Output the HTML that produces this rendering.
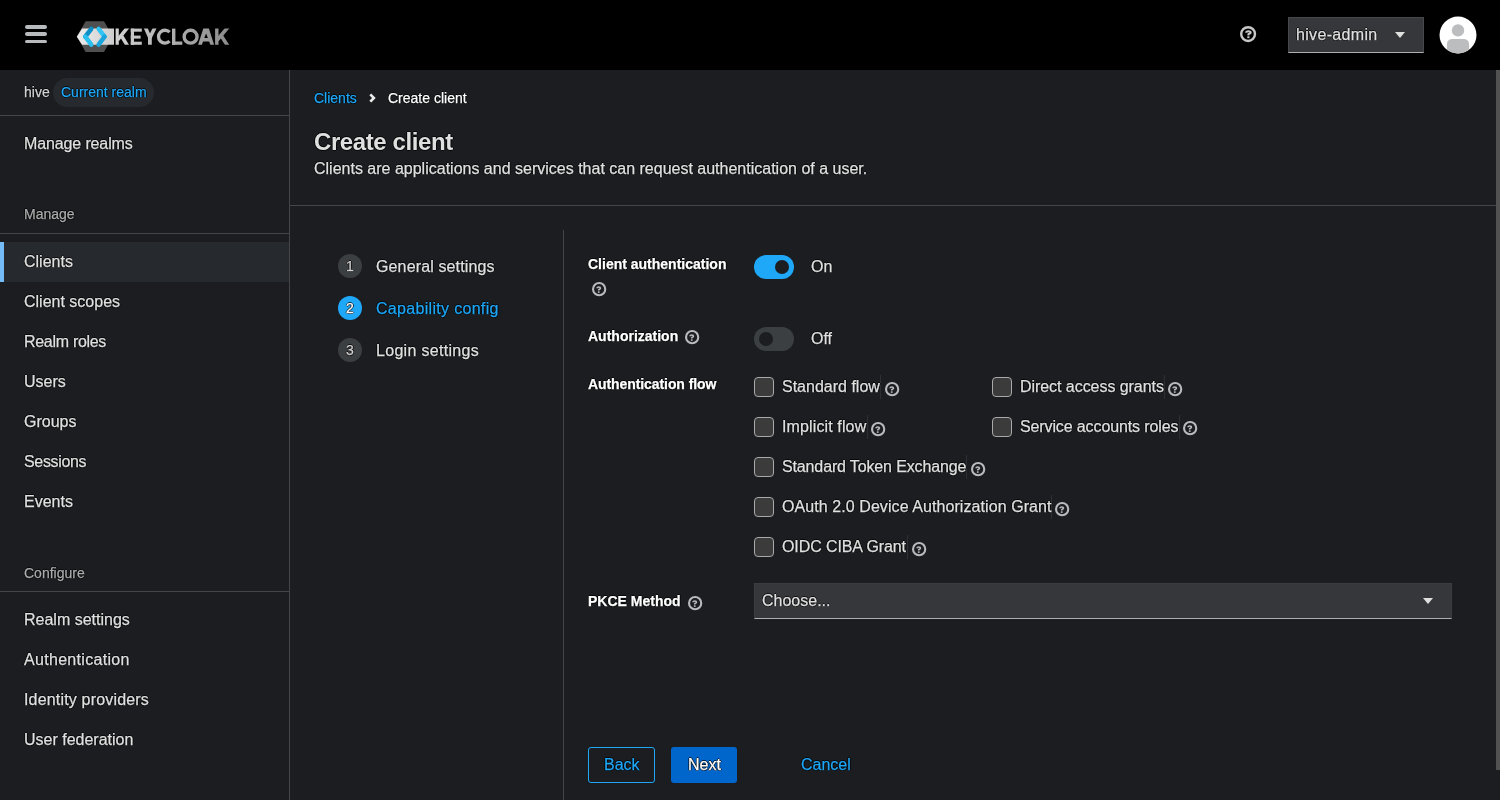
<!DOCTYPE html>
<html><head><meta charset="utf-8">
<style>
*{box-sizing:border-box;margin:0;padding:0}
html,body{width:1500px;height:800px;overflow:hidden;background:#1b1d21;font-family:"Liberation Sans",sans-serif;color:#e0e0e0}
.a{position:absolute;white-space:nowrap;line-height:1;will-change:transform;-webkit-text-stroke:0.25px currentColor;text-shadow:1px 0 0 rgba(0,0,0,.75),-1px 0 0 rgba(0,0,0,.75),0 1px 0 rgba(0,0,0,.75),0 -1px 0 rgba(0,0,0,.75)}
.f14{font-size:14px}
.f16{font-size:16px}
.f24{font-size:24px}
.b{font-weight:700}
.help{position:absolute}
.hl{position:absolute;background:#444548;height:1px}
.vl{position:absolute;background:#444548;width:1px}
.cb{position:absolute;width:20px;height:20px;border:1px solid #a9a9a9;border-radius:4px;background:#3b3b3c}
.blue{color:#1fa7f8}
.lbl{color:#fff}
.r{position:absolute}
</style></head>
<body>
<div class="r" style="left:0;top:0;width:1500px;height:70px;background:#000"></div>
<div class="r" style="left:25px;top:25px;width:22px;height:3.5px;border-radius:2px;background:#b8bbbe"></div>
<div class="r" style="left:25px;top:32px;width:22px;height:3.5px;border-radius:2px;background:#b8bbbe"></div>
<div class="r" style="left:25px;top:39.5px;width:22px;height:3.5px;border-radius:2px;background:#b8bbbe"></div>
<svg class="r" style="left:0;top:0" width="240" height="70" viewBox="0 0 240 70">
<defs>
<linearGradient id="tg" gradientUnits="userSpaceOnUse" x1="114" y1="0" x2="229" y2="0"><stop offset="0" stop-color="#d2d2d2"/><stop offset="1" stop-color="#8c8c8c"/></linearGradient>
<linearGradient id="bgr" gradientUnits="userSpaceOnUse" x1="77" y1="0" x2="114" y2="0"><stop offset="0" stop-color="#ececec"/><stop offset="1" stop-color="#cdcdcd"/></linearGradient>
<clipPath id="tc"><rect x="100" y="28.6" width="140" height="16.2"/></clipPath>
</defs>
<polygon points="85.6,21.2 104,21.2 112.8,36.6 104,52 85.6,52 76.8,36.6" fill="#4f4f4f"/>
<polygon points="82.1,28.6 114,28.6 114,44.8 82.1,44.8 76.8,36.7" fill="url(#bgr)"/>
<line x1="91.3" y1="28.8" x2="85.3" y2="36.7" stroke="#0c8fc6" stroke-width="4.5" stroke-linecap="round"/>
<line x1="85.3" y1="36.7" x2="91.3" y2="44.6" stroke="#2bbff0" stroke-width="4.5" stroke-linecap="round"/>
<line x1="98.6" y1="28.8" x2="104.6" y2="36.7" stroke="#30c4f3" stroke-width="4.5" stroke-linecap="round"/>
<line x1="104.6" y1="36.7" x2="98.6" y2="44.6" stroke="#1aa6dc" stroke-width="4.5" stroke-linecap="round"/>
<g fill="url(#tg)" stroke="none">
<g clip-path="url(#tc)" stroke="url(#tg)" fill="none">
<line x1="117.2" y1="27" x2="117.2" y2="46" stroke-width="3.2"/>
<line x1="117.6" y1="40" x2="128.6" y2="26.2" stroke-width="3.6"/>
<line x1="120.6" y1="34.4" x2="128" y2="46.6" stroke-width="3.6"/>
<line x1="145.2" y1="27" x2="149.9" y2="37.6" stroke-width="3.6"/>
<line x1="155.2" y1="27" x2="149.9" y2="37.6" stroke-width="3.6"/>
<line x1="149.9" y1="37" x2="149.9" y2="46" stroke-width="3.8"/>
<line x1="216.8" y1="27" x2="216.8" y2="46" stroke-width="3.4"/>
<line x1="217.2" y1="40" x2="228.8" y2="26.2" stroke-width="3.6"/>
<line x1="220.4" y1="34.4" x2="228.2" y2="46.6" stroke-width="3.6"/>
</g>
<rect x="130.8" y="28.6" width="3.2" height="16.2"/>
<rect x="130.8" y="28.6" width="11" height="3.1"/>
<rect x="130.8" y="35.6" width="9.8" height="3"/>
<rect x="130.8" y="41.7" width="11" height="3.1"/>
<path d="M169.6 32.2 A6.45 6.45 0 1 0 169.6 41.2" fill="none" stroke="url(#tg)" stroke-width="3.3"/>
<rect x="172" y="28.6" width="3.4" height="16.2"/>
<rect x="172" y="41.5" width="10.3" height="3.3"/>
<circle cx="190.6" cy="36.7" r="6.45" fill="none" stroke="url(#tg)" stroke-width="3.4"/>
<path fill-rule="evenodd" d="M198.1 44.8 L203.3 28.6 L208.9 28.6 L214.1 44.8 L210.3 44.8 L209.2 41.5 L203 41.5 L201.9 44.8 Z M204.3 38.1 L206.1 33.4 L207.9 38.1 Z"/>
</g>
</svg>
<svg class="help" style="left:1237.90px;top:23.80px" width="20.20" height="20.20" viewBox="0 0 20.20 20.20"><circle cx="10.10" cy="10.10" r="6.90" fill="none" stroke="#c7c7c7" stroke-width="2.4"/><path d="M8.10 8.79A2.30 1.59 0 0 1 12.70 8.79C12.70 10.06 10.40 9.58 10.40 10.25V11.44" fill="none" stroke="#c7c7c7" stroke-width="2.0"/><rect x="9.30" y="12.32" width="2.20" height="1.83" fill="#c7c7c7"/></svg>
<div class="r" style="left:1288px;top:17px;width:136px;height:36px;background:#36373b;border:1px solid #47484c;border-bottom-color:#aeafb2"></div>
<div class="a f16 " style="left:1296px;top:27px;letter-spacing:0.333px;">hive-admin</div>
<svg class="r" style="left:1395px;top:32px" width="10" height="6" viewBox="0 0 10 6"><polygon points="0,0 10,0 5,6" fill="#e0e0e0"/></svg>
<svg class="r" style="left:1439px;top:16px" width="38" height="38" viewBox="0 0 38 38">
<defs><clipPath id="av"><circle cx="19" cy="19" r="18.5"/></clipPath></defs>
<circle cx="19" cy="19" r="18.5" fill="#fff"/>
<g clip-path="url(#av)"><circle cx="19" cy="14.4" r="6.2" fill="#bcbdbe"/><path d="M7.9 40 V30 C7.9 24.5 9.5 23 15 23 H23 C28.5 23 30.1 24.5 30.1 30 V40 Z" fill="#bcbdbe"/></g>
</svg>
<div class="vl" style="left:289px;top:70px;height:730px"></div>
<div class="a f14 " style="left:24px;top:85px;color:#d2d2d2">hive</div>
<div class="r" style="left:53px;top:78px;width:101px;height:29px;border-radius:15px;background:#26292d"></div>
<div class="a f14 blue" style="left:61px;top:85px;">Current realm</div>
<div class="hl" style="left:0;top:115px;width:289px"></div>
<div class="a f16 " style="left:24px;top:136px;letter-spacing:-0.125px;">Manage realms</div>
<div class="a f14 " style="left:24px;top:207px;color:#aaabac">Manage</div>
<div class="hl" style="left:0;top:233px;width:289px"></div>
<div class="r" style="left:0;top:242px;width:289px;height:40px;background:#26292d"></div>
<div class="r" style="left:0;top:242px;width:4px;height:40px;background:#73bcf7"></div>
<div class="a f16 " style="left:24px;top:254px;">Clients</div>
<div class="a f16 " style="left:24px;top:294px;">Client scopes</div>
<div class="a f16 " style="left:24px;top:334px;letter-spacing:-0.300px;">Realm roles</div>
<div class="a f16 " style="left:24px;top:374px;">Users</div>
<div class="a f16 " style="left:24px;top:414px;">Groups</div>
<div class="a f16 " style="left:24px;top:454px;letter-spacing:-0.343px;">Sessions</div>
<div class="a f16 " style="left:24px;top:494px;">Events</div>
<div class="a f14 " style="left:24px;top:566px;color:#aaabac">Configure</div>
<div class="hl" style="left:0;top:591px;width:289px"></div>
<div class="a f16 " style="left:24px;top:612px;">Realm settings</div>
<div class="a f16 " style="left:24px;top:652px;letter-spacing:0.308px;">Authentication</div>
<div class="a f16 " style="left:24px;top:692px;letter-spacing:0.176px;">Identity providers</div>
<div class="a f16 " style="left:24px;top:732px;">User federation</div>
<div class="a f14 blue" style="left:314px;top:91px;">Clients</div>
<svg class="r" style="left:368px;top:93px" width="8" height="10" viewBox="0 0 8 10"><polyline points="2.3,1.3 5.9,5 2.3,8.7" fill="none" stroke="#ececec" stroke-width="2.6"/></svg>
<div class="a f14 " style="left:388px;top:91px;color:#fff">Create client</div>
<div class="a f24 b" style="left:314px;top:130px;letter-spacing:-0.4px;-webkit-text-stroke:0">Create client</div>
<div class="a f16 " style="left:314px;top:161px;">Clients are applications and services that can request authentication of a user.</div>
<div class="hl" style="left:290px;top:205px;width:1206px"></div>
<div class="vl" style="left:563px;top:230px;height:570px"></div>
<div class="r" style="left:338px;top:254px;width:24px;height:24px;border-radius:12px;background:#3c3f42"></div>
<div class="a f14" style="left:338px;top:254px;width:24px;line-height:24px;text-align:center;color:#d2d2d2">1</div>
<div class="a f16 " style="left:376px;top:259px;letter-spacing:0.133px;">General settings</div>
<div class="r" style="left:338px;top:296px;width:24px;height:24px;border-radius:12px;background:#1fa7f8"></div>
<div class="a f14" style="left:338px;top:296px;width:24px;line-height:24px;text-align:center;color:#fff">2</div>
<div class="a f16 blue" style="left:376px;top:301px;letter-spacing:0.312px;">Capability config</div>
<div class="r" style="left:338px;top:338px;width:24px;height:24px;border-radius:12px;background:#3c3f42"></div>
<div class="a f14" style="left:338px;top:338px;width:24px;line-height:24px;text-align:center;color:#d2d2d2">3</div>
<div class="a f16 " style="left:376px;top:343px;letter-spacing:0.308px;">Login settings</div>
<div class="a f14 b lbl" style="left:588px;top:257px;">Client authentication</div>
<svg class="help" style="left:589.85px;top:280.35px" width="18.30" height="18.30" viewBox="0 0 18.30 18.30"><circle cx="9.15" cy="9.15" r="6.10" fill="none" stroke="#b8bbbe" stroke-width="2.1"/><path d="M7.05 8.37A1.70 1.32 0 0 1 10.45 8.37C10.45 9.43 8.75 9.03 8.75 9.62V10.61" fill="none" stroke="#b8bbbe" stroke-width="1.6"/><rect x="7.87" y="11.33" width="1.76" height="1.52" fill="#b8bbbe"/></svg>
<div class="r" style="left:754px;top:255px;width:40px;height:24px;border-radius:12px;background:#1fa7f8"></div>
<div class="r" style="left:775px;top:260px;width:14px;height:14px;border-radius:7px;background:#1b1d21"></div>
<div class="a f16 " style="left:810.5px;top:259px;">On</div>
<div class="a f14 b lbl" style="left:588px;top:329px;">Authorization</div>
<svg class="help" style="left:682.85px;top:328.35px" width="18.30" height="18.30" viewBox="0 0 18.30 18.30"><circle cx="9.15" cy="9.15" r="6.10" fill="none" stroke="#b8bbbe" stroke-width="2.1"/><path d="M7.05 8.37A1.70 1.32 0 0 1 10.45 8.37C10.45 9.43 8.75 9.03 8.75 9.62V10.61" fill="none" stroke="#b8bbbe" stroke-width="1.6"/><rect x="7.87" y="11.33" width="1.76" height="1.52" fill="#b8bbbe"/></svg>
<div class="r" style="left:754px;top:327px;width:40px;height:24px;border-radius:12px;background:#3c3f42"></div>
<div class="r" style="left:759px;top:332px;width:14px;height:14px;border-radius:7px;background:#1b1d21"></div>
<div class="a f16 " style="left:810.5px;top:331px;">Off</div>
<div class="a f14 b lbl" style="left:588px;top:377px;letter-spacing:-0.083px;">Authentication flow</div>
<div class="r" style="left:880px;top:375px;width:1px;height:24px;background:#2c2f34"></div>
<div class="cb" style="left:754px;top:377px"></div>
<div class="a f16 " style="left:782px;top:379px;">Standard flow</div>
<svg class="help" style="left:882.85px;top:379.75px" width="18.30" height="18.30" viewBox="0 0 18.30 18.30"><circle cx="9.15" cy="9.15" r="6.10" fill="none" stroke="#b8bbbe" stroke-width="2.1"/><path d="M7.05 8.37A1.70 1.32 0 0 1 10.45 8.37C10.45 9.43 8.75 9.03 8.75 9.62V10.61" fill="none" stroke="#b8bbbe" stroke-width="1.6"/><rect x="7.87" y="11.33" width="1.76" height="1.52" fill="#b8bbbe"/></svg>
<div class="r" style="left:867px;top:415px;width:1px;height:24px;background:#2c2f34"></div>
<div class="cb" style="left:754px;top:417px"></div>
<div class="a f16 " style="left:782px;top:419px;letter-spacing:0.125px;">Implicit flow</div>
<svg class="help" style="left:868.85px;top:419.65px" width="18.30" height="18.30" viewBox="0 0 18.30 18.30"><circle cx="9.15" cy="9.15" r="6.10" fill="none" stroke="#b8bbbe" stroke-width="2.1"/><path d="M7.05 8.37A1.70 1.32 0 0 1 10.45 8.37C10.45 9.43 8.75 9.03 8.75 9.62V10.61" fill="none" stroke="#b8bbbe" stroke-width="1.6"/><rect x="7.87" y="11.33" width="1.76" height="1.52" fill="#b8bbbe"/></svg>
<div class="r" style="left:966px;top:455px;width:1px;height:24px;background:#2c2f34"></div>
<div class="cb" style="left:754px;top:457px"></div>
<div class="a f16 " style="left:782px;top:459px;letter-spacing:-0.136px;">Standard Token Exchange</div>
<svg class="help" style="left:968.55px;top:459.85px" width="18.30" height="18.30" viewBox="0 0 18.30 18.30"><circle cx="9.15" cy="9.15" r="6.10" fill="none" stroke="#b8bbbe" stroke-width="2.1"/><path d="M7.05 8.37A1.70 1.32 0 0 1 10.45 8.37C10.45 9.43 8.75 9.03 8.75 9.62V10.61" fill="none" stroke="#b8bbbe" stroke-width="1.6"/><rect x="7.87" y="11.33" width="1.76" height="1.52" fill="#b8bbbe"/></svg>
<div class="r" style="left:1051px;top:495px;width:1px;height:24px;background:#2c2f34"></div>
<div class="cb" style="left:754px;top:497px"></div>
<div class="a f16 " style="left:782px;top:499px;letter-spacing:0.077px;">OAuth 2.0 Device Authorization Grant</div>
<svg class="help" style="left:1053.15px;top:499.85px" width="18.30" height="18.30" viewBox="0 0 18.30 18.30"><circle cx="9.15" cy="9.15" r="6.10" fill="none" stroke="#b8bbbe" stroke-width="2.1"/><path d="M7.05 8.37A1.70 1.32 0 0 1 10.45 8.37C10.45 9.43 8.75 9.03 8.75 9.62V10.61" fill="none" stroke="#b8bbbe" stroke-width="1.6"/><rect x="7.87" y="11.33" width="1.76" height="1.52" fill="#b8bbbe"/></svg>
<div class="r" style="left:907px;top:535px;width:1px;height:24px;background:#2c2f34"></div>
<div class="cb" style="left:754px;top:537px"></div>
<div class="a f16 " style="left:782px;top:539px;letter-spacing:-0.093px;">OIDC CIBA Grant</div>
<svg class="help" style="left:909.85px;top:539.85px" width="18.30" height="18.30" viewBox="0 0 18.30 18.30"><circle cx="9.15" cy="9.15" r="6.10" fill="none" stroke="#b8bbbe" stroke-width="2.1"/><path d="M7.05 8.37A1.70 1.32 0 0 1 10.45 8.37C10.45 9.43 8.75 9.03 8.75 9.62V10.61" fill="none" stroke="#b8bbbe" stroke-width="1.6"/><rect x="7.87" y="11.33" width="1.76" height="1.52" fill="#b8bbbe"/></svg>
<div class="r" style="left:1164px;top:375px;width:1px;height:24px;background:#2c2f34"></div>
<div class="cb" style="left:992px;top:377px"></div>
<div class="a f16 " style="left:1020px;top:379px;letter-spacing:-0.053px;">Direct access grants</div>
<svg class="help" style="left:1165.75px;top:379.65px" width="18.30" height="18.30" viewBox="0 0 18.30 18.30"><circle cx="9.15" cy="9.15" r="6.10" fill="none" stroke="#b8bbbe" stroke-width="2.1"/><path d="M7.05 8.37A1.70 1.32 0 0 1 10.45 8.37C10.45 9.43 8.75 9.03 8.75 9.62V10.61" fill="none" stroke="#b8bbbe" stroke-width="1.6"/><rect x="7.87" y="11.33" width="1.76" height="1.52" fill="#b8bbbe"/></svg>
<div class="r" style="left:1179px;top:415px;width:1px;height:24px;background:#2c2f34"></div>
<div class="cb" style="left:992px;top:417px"></div>
<div class="a f16 " style="left:1020px;top:419px;letter-spacing:-0.119px;">Service accounts roles</div>
<svg class="help" style="left:1180.85px;top:419.45px" width="18.30" height="18.30" viewBox="0 0 18.30 18.30"><circle cx="9.15" cy="9.15" r="6.10" fill="none" stroke="#b8bbbe" stroke-width="2.1"/><path d="M7.05 8.37A1.70 1.32 0 0 1 10.45 8.37C10.45 9.43 8.75 9.03 8.75 9.62V10.61" fill="none" stroke="#b8bbbe" stroke-width="1.6"/><rect x="7.87" y="11.33" width="1.76" height="1.52" fill="#b8bbbe"/></svg>
<div class="a f14 b lbl" style="left:588px;top:594px;">PKCE Method</div>
<svg class="help" style="left:685.85px;top:593.65px" width="18.30" height="18.30" viewBox="0 0 18.30 18.30"><circle cx="9.15" cy="9.15" r="6.10" fill="none" stroke="#b8bbbe" stroke-width="2.1"/><path d="M7.05 8.37A1.70 1.32 0 0 1 10.45 8.37C10.45 9.43 8.75 9.03 8.75 9.62V10.61" fill="none" stroke="#b8bbbe" stroke-width="1.6"/><rect x="7.87" y="11.33" width="1.76" height="1.52" fill="#b8bbbe"/></svg>
<div class="r" style="left:754px;top:583px;width:698px;height:36px;background:#36373b;border:1px solid #3b3c40;border-bottom-color:#aeafb2"></div>
<div class="a f16 " style="left:762px;top:593px;">Choose...</div>
<svg class="r" style="left:1423px;top:598px" width="10" height="6" viewBox="0 0 10 6"><polygon points="0,0 10,0 5,6" fill="#e0e0e0"/></svg>
<div class="r" style="left:588px;top:747px;width:67px;height:36px;border:1px solid #1fa7f8;border-radius:3px"></div>
<div class="a f16 blue" style="left:604px;top:757px;">Back</div>
<div class="r" style="left:671px;top:747px;width:66px;height:36px;background:#0066cc;border-radius:3px"></div>
<div class="a f16 " style="left:687.5px;top:757px;color:#fff">Next</div>
<div class="a f16 blue" style="left:801px;top:757px;">Cancel</div>
<div class="r" style="left:1496px;top:70px;width:4px;height:700px;background:#525252"></div>
</body></html>
